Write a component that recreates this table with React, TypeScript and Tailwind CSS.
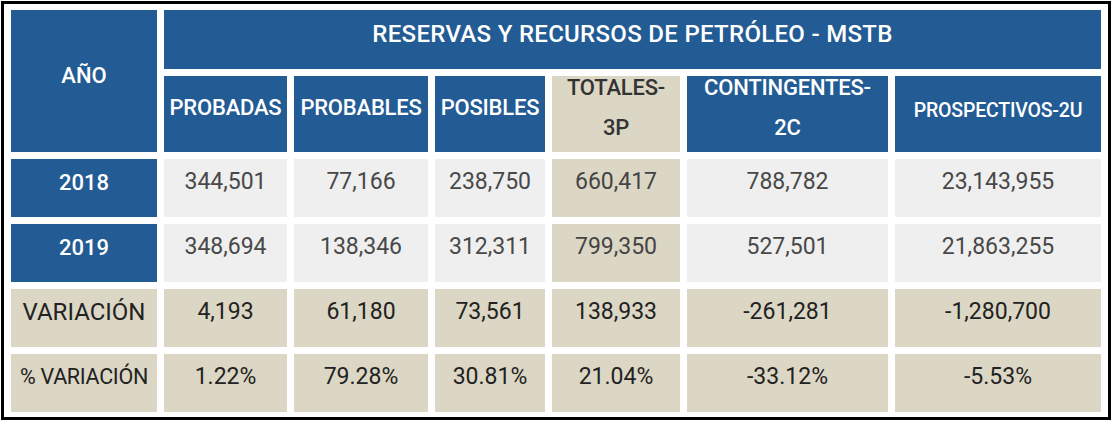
const BLUE = "bg-[#235b94]";
const BEIGE = "bg-[#dcd7c4]";

type Row = {
  label: string;
  values: string[];
  kind: "year" | "var";
};

const rows: Row[] = [
  { label: "2018", kind: "year", values: ["344,501", "77,166", "238,750", "660,417", "788,782", "23,143,955"] },
  { label: "2019", kind: "year", values: ["348,694", "138,346", "312,311", "799,350", "527,501", "21,863,255"] },
  { label: "VARIACIÓN", kind: "var", values: ["4,193", "61,180", "73,561", "138,933", "-261,281", "-1,280,700"] },
  { label: "% VARIACIÓN", kind: "var", values: ["1.22%", "79.28%", "30.81%", "21.04%", "-33.12%", "-5.53%"] },
];

const headers = ["PROBADAS", "PROBABLES", "POSIBLES", "TOTALES-\n3P", "CONTINGENTES-\n2C", "PROSPECTIVOS-2U"];

function Cell({ className, children }: { className: string; children: React.ReactNode }) {
  return (
    <div className={`flex items-center justify-center text-center ${className}`}>
      {children}
    </div>
  );
}

export default function App() {
  return (
    <div className="h-[426px] w-[1116px] bg-white p-px" style={{ fontFamily: "Roboto, 'Liberation Sans', sans-serif" }}>
      <div className="h-[419px] w-[1110px] border-[3px] border-black px-[6px] pt-[6px]">
        <div className="grid grid-cols-[146px_123px_134px_110px_128px_201px_206px] grid-rows-[59px_76px_58px_58px_58px_58px] gap-[7px] pl-px">
          {/* Year header */}
          <Cell className={`${BLUE} row-span-2 pb-[12px] text-[22px] font-medium text-white`}>AÑO</Cell>
          <Cell className={`${BLUE} col-span-6 pb-[12px] text-[24px] font-medium tracking-[0.3px] text-white`}>
            RESERVAS Y RECURSOS DE PETRÓLEO - MSTB
          </Cell>

          {/* Category headers */}
          {headers.map((h, i) => (
            <Cell
              key={h}
              className={`whitespace-pre-line leading-[40px] font-medium tracking-[-0.2px] ${
                i === 3 ? `${BEIGE} text-[#333]` : `${BLUE} text-white`
              } ${i === 5 ? "pb-[6px] text-[19.5px]" : "pb-[12px] text-[22px]"}`}
            >
              {h}
            </Cell>
          ))}

          {/* Data rows */}
          {rows.map((r) => (
            <>
              <Cell
                key={r.label}
                className={`pb-[12px] ${
                  r.kind === "year"
                    ? `${BLUE} text-[22px] font-medium text-white`
                    : `${BEIGE} text-[#222] ${r.label.startsWith("%") ? "text-[21.5px] tracking-[-0.3px]" : "text-[24px]"}`
                }`}
              >
                {r.label}
              </Cell>
              {r.values.map((v, i) => (
                <Cell
                  key={r.label + i}
                  className={`pb-[12px] text-[23px] ${
                    r.kind === "var"
                      ? `${BEIGE} text-[#222]`
                      : i === 3
                        ? `${BEIGE} text-[#444]`
                        : "bg-[#efefef] text-[#484848]"
                  }`}
                >
                  {v}
                </Cell>
              ))}
            </>
          ))}
        </div>
      </div>
    </div>
  );
}
